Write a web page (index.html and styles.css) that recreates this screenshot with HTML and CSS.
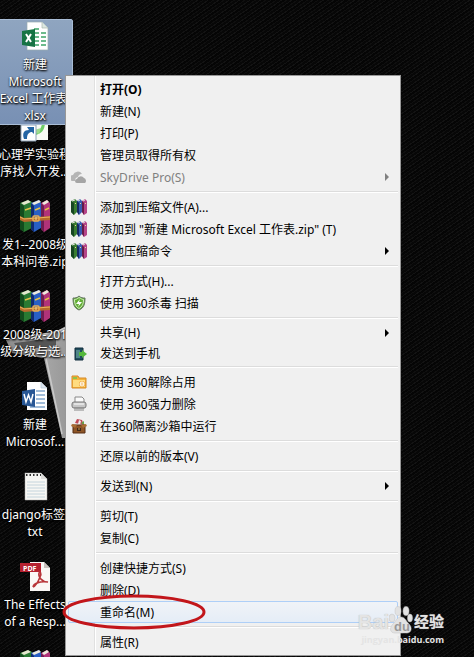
FILE: index.html
```html
<!DOCTYPE html>
<html lang="zh-CN">
<head>
<meta charset="utf-8">
<title>桌面</title>
<link rel="stylesheet" href="styles.css">
</head>
<body>
<svg class="defs" aria-hidden="true">
  <defs>
    <symbol id="books" viewBox="0 0 32 34">
      <path d="M1 4 9 1l4 2v26l-8 4-4-3z" fill="#297a32"/><path d="m1 4 4 3v26l-4-3z" fill="#124c1d"/><path d="m2 4 7-3 3 2-7 3z" fill="#e5e8cf"/>
      <path d="m12 4 8-3 2 3v25l-7 4-3-3z" fill="#285fc4"/><path d="m12 4 3 3v26l-3-3z" fill="#102b70"/><path d="m13 4 7-3 2 2-7 3z" fill="#eee9dc"/>
      <path d="m22 4 6-3 3 3v25l-6 4-3-3z" fill="#b13379"/><path d="m22 4 3 3v26l-3-3z" fill="#701c50"/><path d="m23 4 5-3 2 2-5 3z" fill="#eee9dc"/>
      <path d="m6 11 6-2M16 11l5-2m5 2 4-2" stroke="#e8c347" stroke-width="1.5"/>
      <path d="m1 17 4 2 26-2v4L5 23l-4-2z" fill="#b66a2c"/><path d="m1 18 4 2 26-2" fill="none" stroke="#e9b35d"/>
      <rect x="14" y="17" width="6" height="5" rx="1" fill="none" stroke="#e5ad55" stroke-width="1.5"/><path d="M17 18v3" stroke="#f4dc90"/>
    </symbol>
    <symbol id="books-small" viewBox="0 0 16 16">
      <path d="m0 2 4-2 2 2v11l-3 3-3-3z" fill="#397c31"/><path d="m0 2 3 2v12l-3-3z" fill="#164521"/>
      <path d="m6 2 3-2 2 2v11l-3 3-2-3z" fill="#375bb0"/><path d="m6 2 2 2v12l-2-3z" fill="#132960"/>
      <path d="m11 2 3-2 2 2v12l-3 2-2-3z" fill="#b54488"/><path d="m11 2 2 2v12l-2-3z" fill="#651b47"/>
      <path d="m1 2 3-1m3 1 2-1m3 1 2-1" stroke="#ddd"/><path d="m4 5 1-1m4 1 1-1m4 1 1-1" stroke="#e7d99a"/>
    </symbol>
  </defs>
</svg>
<div class="screen">
  <svg class="wallpaper" viewBox="0 0 76 120" aria-hidden="true">
    <defs><linearGradient id="stone" x2="1"><stop stop-color="#8a8a8a"/><stop offset=".6" stop-color="#a8a8a8"/><stop offset="1" stop-color="#999"/></linearGradient></defs>
    <path d="M6 14 25 11 57 5 66 0v112h-4L44 32l-32-5z" fill="url(#stone)"/>
    <path d="m14 17 42-5v9l-38 2z" fill="#555"/>
    <path d="M46 32 62 108M6 14l50-8 9-4M14 26l44-2" stroke="#d8d8d8" stroke-width="1.500" fill="none" opacity=".7"/>
  </svg>
  <main class="desktop">
    <a href="#" class="shortcut selected">
      <svg class="pic" viewBox="0 0 32 32"><path d="M8 2h15l6 6v22H8z" fill="#fff" stroke="#99aeb0" stroke-width=".7"/><path d="M23 2v6h6" fill="#dce7e0" stroke="#a9b7ae" stroke-width=".7"/><path d="M15 8h5v2h-5zm0 4h5v2h-5zm7 0h5v2h-5zm-7 4h5v2h-5zm7 0h5v2h-5zm-7 4h5v2h-5zm7 0h5v2h-5zm-7 4h5v2h-5zm7 0h5v2h-5z" fill="#6dbb8c"/><path d="m3 11 13-2v18L3 25z" fill="#167344"/><path d="m7 14 5 8m0-8-5 8" stroke="#fff" stroke-width="2"/></svg>
      <span class="label">新建<br>Microsoft<br>Excel 工作表.<br>xlsx</span>
    </a>
    <a href="#" class="shortcut">
      <svg class="pic" viewBox="0 0 32 32"><path d="M6 1h23v29H6z" fill="#f8fbf5"/><path d="M26 12c0 9-4 11-9 13l-1-4c5 0 6-3 7-7z" fill="#6fce68"/><path d="m12 21 10-3-2 6z" fill="#9ddb8d"/><path d="M2 15h15v16H2z" fill="#fff" stroke="#8da2b6"/><path d="M5 29c-2-6 0-9 5-9l-2-3h7v7l-2-2c-3 0-5 2-5 7z" fill="#2465a4"/></svg>
      <span class="label">心理学实验程<br>序找人开发...</span>
    </a>
    <a href="#" class="shortcut"><svg class="pic"><use href="#books"/></svg><span class="label">发1--2008级<br>本科问卷.zip</span></a>
    <a href="#" class="shortcut"><svg class="pic"><use href="#books"/></svg><span class="label">2008级-201<br>级分级与选...</span></a>
    <a href="#" class="shortcut">
      <svg class="pic" viewBox="0 0 32 32"><path d="M8 2h14l6 6v22H8z" fill="#fff"/><path d="M22 2v6h6" fill="#dce6f0" stroke="#b3c4d3" stroke-width=".7"/><path d="M17 11h9m-9 4h9m-9 4h9m-9 4h9M11 27h15" stroke="#83a7cc" stroke-width="1.5"/><path d="m3 11 13-2v18L3 25z" fill="#285795"/><path d="m5 14 2 8 2.500-7 2.500 7 2-8" fill="none" stroke="#fff" stroke-width="1.500"/></svg>
      <span class="label">新建<br>Microsof...</span>
    </a>
    <a href="#" class="shortcut">
      <svg class="pic" viewBox="0 0 32 32"><path d="M6 3h16l6 6v21H6z" fill="#f7f7f4" stroke="#aaa" stroke-width=".5"/><path d="M22 3v6h6" fill="#dcdcda"/><path d="M8 12h18M8 15h18M8 18h18M8 21h18M8 24h18M8 27h18" stroke="#b8ccd7" stroke-width=".8"/><path d="M7 5h15" stroke="#333" stroke-width="2" stroke-dasharray="1.500 2"/></svg>
      <span class="label">django标签.<br>txt</span>
    </a>
    <a href="#" class="shortcut">
      <svg class="pic" viewBox="0 0 32 32"><path d="M11 2h14l6 6v23H11z" fill="#faf7f5"/><path d="m25 2 6 6h-6z" fill="#c9c0bc"/><path d="M1 3h21v9H1z" fill="#b62230"/><text x="4" y="10.500" class="pdf">PDF</text><path d="M14 27c1-4 7-6 15-5-6 0-10-5-9-9 1-2 3 0 1 4-2 5-4 9-7 10" fill="none" stroke="#b83539" stroke-width="1.600"/></svg>
      <span class="label">The Effects<br>of a Resp...</span>
    </a>
    <a href="#" class="shortcut" aria-label="压缩文件"><svg class="pic"><use href="#books"/></svg></a>
  </main>

  <nav class="menu" aria-label="快捷菜单">
    <div class="group">
      <button class="item default">打开(O)</button>
      <button class="item">新建(N)</button>
      <button class="item">打印(P)</button>
      <button class="item">管理员取得所有权</button>
      <button class="item more" disabled><svg class="icon" viewBox="0 0 16 16"><path d="M2 12a3 3 0 0 1 0-6 5 5 0 0 1 9-1 4 4 0 0 0-4 3 4 4 0 0 0-3 4z" fill="#b5b5b5"/><path d="M6 14a2 2 0 0 1 0-4 4 4 0 0 1 7-1 3 3 0 0 1 1 5z" fill="#a5a5a5"/></svg>SkyDrive Pro(S)</button>
    </div>
    <div class="group">
      <button class="item"><svg class="icon"><use href="#books-small"/></svg>添加到压缩文件(A)...</button>
      <button class="item"><svg class="icon"><use href="#books-small"/></svg>添加到 "新建 Microsoft Excel 工作表.zip" (T)</button>
      <button class="item more"><svg class="icon"><use href="#books-small"/></svg>其他压缩命令</button>
    </div>
    <div class="group">
      <button class="item">打开方式(H)...</button>
      <button class="item"><svg class="icon" viewBox="0 0 16 16"><path d="M8 1c2 2 4 2 6 2 0 6-1 10-6 12C3 13 2 9 2 3c2 0 4 0 6-2z" fill="#62ad35" stroke="#68756a"/><path d="M8 2.500c2 1 3 2 4.500 2 0 4-1 7-4.500 9-3.500-2-4.500-5-4.500-9C5 4.500 6 4 8 2.500z" fill="none" stroke="#d8f0c5"/><path d="m9 4-4 5h3l-1 3 4-5H8z" fill="#fff"/></svg>使用 360杀毒 扫描</button>
    </div>
    <div class="group compact">
      <button class="item more">共享(H)</button>
      <button class="item"><svg class="icon" viewBox="0 0 16 16"><path d="M4 2h8v12H4z" fill="#204d5d" stroke="#102c3c"/><path d="M5 4h4v8H5z" fill="#4f8588"/><path d="M8 6h3V4l5 4-5 4v-2H8z" fill="#55b83c"/></svg>发送到手机</button>
    </div>
    <div class="group">
      <button class="item"><svg class="icon" viewBox="0 0 16 16"><path d="M1 2h6l1 2h7v10H1z" fill="#f4b33b" stroke="#d78a29"/><path d="M2 6h12v7H2z" fill="#ffdc80"/><path d="M2 3h4v2H2z" fill="#8fc44a"/><circle cx="11" cy="10" r="3" fill="#f1a83a"/><circle cx="11" cy="10" r="2" fill="none" stroke="#fff"/><path d="M9 10h4" stroke="#fff"/></svg>使用 360解除占用</button>
      <button class="item"><svg class="icon" viewBox="0 0 16 16"><path d="M4 6V1h7l2 2v3" fill="#fafafa" stroke="#888"/><rect x="1" y="6" width="14" height="6" rx="2" fill="#c6c6c6" stroke="#777"/><path d="M3 8h10" stroke="#fff"/><path d="M4 11v4m2-4v4m2-4v4m2-4v4m2-4v4" stroke="#888"/></svg>使用 360强力删除</button>
      <button class="item"><svg class="icon" viewBox="0 0 16 16"><path d="m4 5 2-4 5 1 2 5z" fill="#bf4955"/><path d="m7 6 1-4 2 1-1 4z" fill="#eee"/><path d="m10 5 3-2v4z" fill="#64a348"/><path d="M2 7h12v8H2z" fill="#8d5526" stroke="#542d12"/><path d="m1 6 5 1-2 3-4-2zm14 0-5 1 2 3 4-2z" fill="#a96d33"/><path d="M6 10h4v3H6z" fill="#3d2719"/><path d="M7 11h2" stroke="#d4a055"/></svg>在360隔离沙箱中运行</button>
    </div>
    <div class="group"><button class="item">还原以前的版本(V)</button></div>
    <div class="group"><button class="item more">发送到(N)</button></div>
    <div class="group">
      <button class="item">剪切(T)</button>
      <button class="item">复制(C)</button>
    </div>
    <div class="group">
      <button class="item">创建快捷方式(S)</button>
      <button class="item">删除(D)</button>
      <button class="item current">重命名(M)</button>
    </div>
    <div class="group"><button class="item">属性(R)</button></div>
  </nav>

  <svg class="marker" viewBox="0 0 144 36" aria-hidden="true"><ellipse cx="72" cy="18" rx="70" ry="16" fill="none" stroke="#c2161b" stroke-width="3"/></svg>

  <div class="watermark">
    <div class="brand"><span>Bai</span><svg class="paw" viewBox="0 0 24 28" aria-hidden="true"><g fill="#e2e2e2" stroke="#c4c4c4" stroke-width=".5"><ellipse cx="3" cy="12" rx="3" ry="4"/><ellipse cx="9" cy="5" rx="3" ry="4.500"/><ellipse cx="17" cy="5" rx="3" ry="4.500"/><ellipse cx="21" cy="12" rx="2.500" ry="4"/><path d="M12 11c4 0 5 4 8 7 4 4 2 9-2 9H6c-5 0-6-5-2-9 3-3 4-7 8-7z"/></g><text x="5" y="25" class="du">du</text></svg><span class="cn">经验</span></div>
    <div class="site">jingyan.baidu.com</div>
  </div>
</div>
</body>
</html>
```
FILE: styles.css
```css
*, ::before, ::after { box-sizing: border-box; }

body {
  margin: 0;
  background: #080808;
  font: 12px/17px "Noto Sans", "Noto Sans CJK SC", sans-serif;
}

.defs { position: absolute; width: 0; height: 0; }

.screen {
  position: relative;
  display: flex;
  align-items: flex-start;
  height: 100vh;
  overflow: hidden;
  background: repeating-linear-gradient(145deg, #050505 0 2px, #0f0f0f 2px 3px, #070707 3px 5px, #131313 5px 6px);
}

.wallpaper { position: absolute; left: 0; top: 326px; width: 76px; height: 120px; }

.desktop {
  position: relative;
  flex: 0 0 65px;
  min-width: 0;
  display: grid;
  grid-template-columns: 65px;
  grid-auto-rows: 90px;
  padding-top: 19px;
}

.shortcut {
  display: flex;
  flex-direction: column;
  align-items: center;
  gap: 3px;
  width: 76px;
  margin-left: -3px;
  color: #fff;
  text-align: center;
  text-decoration: none;
  white-space: nowrap;
}

.shortcut.selected {
  position: relative;
  z-index: 1;
  gap: 4px;
  height: 106px;
  background: linear-gradient(#8fa5c0, #7890b4);
  border: 1px solid #a9bdd6;
  border-radius: 2px;
}

.pic { flex: none; width: 32px; height: 34px; }
.shortcut.selected .pic { height: 32px; }
.label { text-shadow: 0 1px 2px #000, 1px 1px 2px #000; }
.pdf { fill: #fff; font: bold 7px "Open Sans", sans-serif; }

.menu {
  position: relative;
  z-index: 2;
  flex: 0 1 336px;
  margin-top: 75px;
  padding: 2px;
  border: 1px solid #979797;
  background: linear-gradient(90deg, transparent 28px, #e0e0e0 28px 29px, #fff 29px 30px, transparent 30px) #f0f0f0;
}

.group + .group { padding-top: 8px; }
.group.compact + .group { padding-top: 7px; }

.group + .group::before {
  content: "";
  display: block;
  height: 2px;
  margin: -5px 0 3px 28px;
  border-top: 1px solid #dcdcdc;
  border-bottom: 1px solid #fff;
}

.item {
  position: relative;
  display: flex;
  align-items: center;
  width: 100%;
  height: 22px;
  padding: 0 8px 0 31px;
  border: 1px solid transparent;
  border-radius: 2px;
  background: none;
  color: #000;
  font: inherit;
  text-align: left;
  white-space: nowrap;
}

.compact .item { height: 21px; }
.item:disabled { color: #808080; }
.item.default { font-weight: bold; }
.item.current { border-color: #aecff7; background: linear-gradient(#f0f3f7, #e5edf7); }
.icon { position: absolute; left: 2px; width: 16px; height: 16px; }

.item.more::after {
  content: "";
  margin-left: auto;
  border: 4px solid transparent;
  border-left-color: currentColor;
  border-right: 0;
}

.marker { position: absolute; z-index: 3; left: 62px; top: 594px; width: 144px; height: 36px; }

.watermark {
  position: absolute;
  z-index: 3;
  right: 30px;
  bottom: 12px;
  color: #e4e4e4;
  text-shadow: 0 0 1px #aaa;
}

.brand {
  display: flex;
  align-items: flex-end;
  font: bold 20px/24px "Liberation Sans", "Noto Sans CJK SC", sans-serif;
}

.brand .cn { margin-left: 1px; font-size: 15px; }
.paw { width: 24px; height: 28px; }
.du { fill: #999; font: bold 13px "Liberation Sans", sans-serif; text-shadow: none; }
.site { font: bold 9px/11px "Open Sans", sans-serif; text-align: right; text-shadow: none; }
```
